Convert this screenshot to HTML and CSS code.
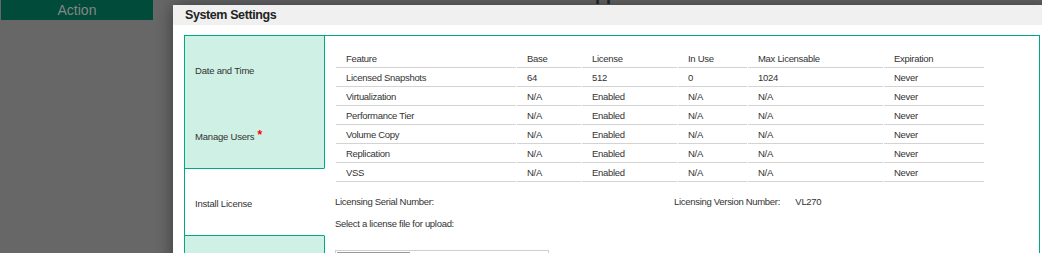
FILE: index.html
```html
<!DOCTYPE html>
<html lang="en">

<head>
    <meta charset="UTF-8">
    <meta name="viewport" content="width=device-width, initial-scale=1.0">
    <title>System Settings</title>
    <link rel="stylesheet" href="styles.css">
</head>

<body>

    <!-- page behind the dialog -->
    <div class="toolbar">
        <button class="action-btn">Action</button>
    </div>
    <span class="behind-title">pp</span>

    <!-- dialog -->
    <div class="modal">
        <div class="modal-header">System Settings</div>
        <div class="modal-body">
            <div class="settings">
                <ul class="tabs">
                    <li class="tab">Date and Time</li>
                    <li class="tab">Manage Users<span class="required">*</span></li>
                    <li class="tab active">Install License</li>
                    <li class="tab"></li>
                </ul>
                <div class="tab-content">
                    <table class="license-table">
                        <thead>
                            <tr>
                                <th class="col-feature">Feature</th>
                                <th class="col-base">Base</th>
                                <th class="col-license">License</th>
                                <th class="col-inuse">In Use</th>
                                <th class="col-max">Max Licensable</th>
                                <th class="col-exp">Expiration</th>
                            </tr>
                        </thead>
                        <tbody>
                            <tr>
                                <td>Licensed Snapshots</td>
                                <td>64</td>
                                <td>512</td>
                                <td>0</td>
                                <td>1024</td>
                                <td>Never</td>
                            </tr>
                            <tr>
                                <td>Virtualization</td>
                                <td>N/A</td>
                                <td>Enabled</td>
                                <td>N/A</td>
                                <td>N/A</td>
                                <td>Never</td>
                            </tr>
                            <tr>
                                <td>Performance Tier</td>
                                <td>N/A</td>
                                <td>Enabled</td>
                                <td>N/A</td>
                                <td>N/A</td>
                                <td>Never</td>
                            </tr>
                            <tr>
                                <td>Volume Copy</td>
                                <td>N/A</td>
                                <td>Enabled</td>
                                <td>N/A</td>
                                <td>N/A</td>
                                <td>Never</td>
                            </tr>
                            <tr>
                                <td>Replication</td>
                                <td>N/A</td>
                                <td>Enabled</td>
                                <td>N/A</td>
                                <td>N/A</td>
                                <td>Never</td>
                            </tr>
                            <tr>
                                <td>VSS</td>
                                <td>N/A</td>
                                <td>Enabled</td>
                                <td>N/A</td>
                                <td>N/A</td>
                                <td>Never</td>
                            </tr>
                        </tbody>
                    </table>

                    <div class="license-info">
                        <div class="serial">Licensing Serial Number:</div>
                        <div class="version">
                            <span class="version-label">Licensing Version Number:</span>
                            <span>VL270</span>
                        </div>
                    </div>

                    <div class="upload-label">Select a license file for upload:</div>
                    <div class="file-input">
                        <span class="file-btn"></span>
                    </div>
                </div>
            </div>
        </div>
    </div>

</body>

</html>
```

FILE: styles.css
```css
* {
    margin: 0;
    padding: 0;
    box-sizing: border-box;
}

body {
    background: #676767;
    font-family: 'Liberation Sans', Arial, sans-serif;
    font-size: 9.5px;
    letter-spacing: -0.3px;
    color: #333;
    overflow: hidden;
    height: 253px;
}

/* Page behind the overlay */
.toolbar {
    padding-left: 1px;
}

.action-btn {
    display: block;
    width: 152px;
    height: 20px;
    border: none;
    background: #004b39;
    color: #858585;
    font-family: 'Liberation Sans', Arial, sans-serif;
    font-size: 14px;
    letter-spacing: 0;
    line-height: 20px;
}

.behind-title {
    position: absolute;
    left: 595px;
    top: -15px;
    font-size: 18px;
    font-weight: 700;
    letter-spacing: 0;
    line-height: 18px;
    color: #1e2a33;
}

/* Dialog */
.modal {
    position: absolute;
    left: 173px;
    top: 5px;
    width: 878px;
    height: 260px;
    background: #fff;
    box-shadow: 0 0 16px rgba(0, 0, 0, 0.45);
}

.modal-header {
    height: 20px;
    padding-left: 12px;
    background: #f0f0f0;
    color: #222;
    font-size: 12.5px;
    font-weight: 700;
    letter-spacing: -0.4px;
    line-height: 21px;
}

.modal-body {
    padding: 10px 11px 0;
}

.settings {
    display: flex;
    border: 1px solid #01a982;
    border-bottom: none;
}

/* Tabs */
.tabs {
    width: 140px;
    flex: none;
    list-style: none;
    letter-spacing: -0.2px;
}

.tab {
    height: 66px;
    display: flex;
    align-items: center;
    padding: 2px 0 0 10px;
    background: #cff0e5;
    border-right: 1px solid #01a982;
}

.tab.active {
    height: 68px;
    background: #fff;
    border-top: 1px solid #01a982;
    border-bottom: 1px solid #01a982;
    border-right-color: transparent;
}

.required {
    color: #ff0000;
    font-size: 12px;
    font-weight: 700;
    margin-left: 3px;
    align-self: flex-start;
    margin-top: 24px;
}

/* License table */
.tab-content {
    flex: 1;
    padding: 13px 0 0 11px;
}

.license-table {
    border-collapse: separate;
    border-spacing: 1px 0;
    margin-left: -1px;
    table-layout: fixed;
}

.license-table th,
.license-table td {
    padding: 1px 10px 0;
    height: 19px;
    line-height: 17px;
    text-align: left;
    font-weight: 400;
    white-space: nowrap;
    border-bottom: 1px solid #d3d3d3;
}

.col-feature { width: 180px; }
.col-base { width: 64px; }
.col-license { width: 95px; }
.col-inuse { width: 69px; }
.col-max { width: 135px; }
.col-exp { width: 100px; }

/* Licensing info */
.license-info {
    display: flex;
    margin: 10px 0 0 -1px;
    line-height: 19px;
    white-space: nowrap;
}

.serial {
    width: 339px;
}

.version-label {
    display: inline-block;
    width: 119px;
}

.upload-label {
    margin: 3px 0 0 -1px;
    line-height: 19px;
}

.file-input {
    width: 214px;
    height: 22px;
    margin: 17px 0 0 -1px;
    border: 1px solid #cfcfcf;
    padding: 1px;
}

.file-btn {
    display: block;
    width: 73px;
    height: 18px;
    border: 1px solid #9a9a9a;
    background: #efefef;
}
```
